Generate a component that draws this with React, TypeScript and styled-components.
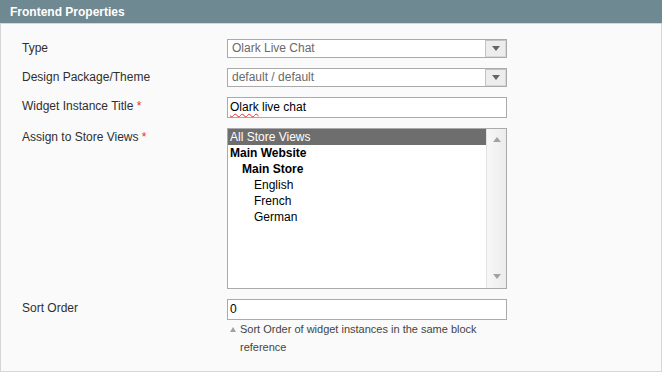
import React from 'react';
import styled, { createGlobalStyle } from 'styled-components';

const GlobalStyle = createGlobalStyle`
  body {
    margin: 0;
    font-family: 'Liberation Sans', Arial, sans-serif;
    font-size: 12px;
    color: #2f2f2f;
    background: #fff;
  }
`;

const Panel = styled.div`
  width: 662px;
  height: 372px;
  display: flex;
  flex-direction: column;
`;

const Head = styled.div`
  height: 23px;
  box-sizing: border-box;
  background: #6f8992;
  padding: 2px 10px 0;
  display: flex;
  align-items: center;
`;

const HeadTitle = styled.h4`
  margin: 0;
  color: #fff;
  font-size: 12px;
  font-weight: bold;
  line-height: 15px;
`;

const Fieldset = styled.div`
  flex: 1;
  background: #fafafa;
  border: 1px solid #d6d6d6;
  padding: 15px 0 0 21px;
`;

const FormGrid = styled.div`
  display: grid;
  grid-template-columns: 205px 280px;
  row-gap: 10px;
`;

const Label = styled.div`
  padding-top: 2px;
  line-height: 15px;
  color: #2f2f2f;
`;

const Required = styled.span`
  color: #eb340a;
`;

const Select = styled.div`
  height: 19px;
  box-sizing: border-box;
  border: 1px solid #aaa;
  background: #fff;
  display: flex;
  align-items: stretch;
`;

const SelectText = styled.div`
  flex: 1;
  padding-left: 4px;
  line-height: 17px;
  color: #6a6a6a;
`;

const SelectButton = styled.div`
  width: 21px;
  box-sizing: border-box;
  border: 1px solid #c3c3c3;
  border-right-color: #d8d8d8;
  border-bottom-color: #d8d8d8;
  background: #ededed;
  display: flex;
  align-items: center;
  justify-content: center;
`;

const Arrow = styled.span<{ up?: boolean; color?: string }>`
  width: 0;
  height: 0;
  border-left: 4px solid transparent;
  border-right: 4px solid transparent;
  ${(p) =>
    p.up
      ? `border-bottom: 5px solid ${p.color || '#666'};`
      : `border-top: 5px solid ${p.color || '#666'};`}
`;

const TextField = styled.div`
  height: 21px;
  box-sizing: border-box;
  border: 1px solid #aaa;
  background: #fff;
  padding: 0 2px;
  line-height: 19px;
  color: #000;
`;

const Misspelled = styled.span`
  text-decoration: underline wavy #e03030;
  text-decoration-thickness: 1px;
  text-underline-offset: 2px;
`;

const ListBox = styled.div`
  height: 161px;
  box-sizing: border-box;
  border: 1px solid #aaa;
  background: #fff;
  display: flex;
`;

const Options = styled.div`
  flex: 1;
`;

const Option = styled.div<{ level: number; strong?: boolean; selected?: boolean }>`
  height: 16px;
  line-height: 16px;
  padding-left: ${(p) => 2 + p.level * 12}px;
  font-weight: ${(p) => (p.strong ? 'bold' : 'normal')};
  background: ${(p) => (p.selected ? '#6e6e6e' : 'transparent')};
  color: ${(p) => (p.selected ? '#fff' : '#000')};
`;

const ScrollBar = styled.div`
  width: 20px;
  border-left: 1px solid #e2e2e2;
  background: linear-gradient(to right, #f7f7f7, #ececec);
  display: flex;
  flex-direction: column;
  justify-content: space-between;
  align-items: center;
  padding: 8px 0 9px;
  box-sizing: border-box;
`;

const Note = styled.div`
  display: flex;
  gap: 4px;
  padding-left: 3px;
  font-size: 11px;
  line-height: 18px;
  color: #444;
`;

const NoteMark = styled.span`
  width: 0;
  height: 0;
  margin-top: 7px;
  border-left: 3px solid transparent;
  border-right: 3px solid transparent;
  border-bottom: 5px solid #9aa4a8;
  flex-shrink: 0;
`;

const NoteText = styled.div`
  width: 250px;
`;

const stores = [
  { name: 'All Store Views', level: 0, strong: false, selected: true },
  { name: 'Main Website', level: 0, strong: true },
  { name: 'Main Store', level: 1, strong: true },
  { name: 'English', level: 2 },
  { name: 'French', level: 2 },
  { name: 'German', level: 2 },
];

function App() {
  return (
    <>
      <GlobalStyle />
      <Panel>
        <Head>
          <HeadTitle>Frontend Properties</HeadTitle>
        </Head>
        <Fieldset>
          <FormGrid>
            <Label>Type</Label>
            <Select>
              <SelectText>Olark Live Chat</SelectText>
              <SelectButton>
                <Arrow />
              </SelectButton>
            </Select>

            <Label>Design Package/Theme</Label>
            <Select>
              <SelectText>default / default</SelectText>
              <SelectButton>
                <Arrow />
              </SelectButton>
            </Select>

            <Label>
              Widget Instance Title <Required>*</Required>
            </Label>
            <TextField>
              <Misspelled>Olark</Misspelled> live chat
            </TextField>

            <Label>
              Assign to Store Views <Required>*</Required>
            </Label>
            <ListBox>
              <Options>
                {stores.map((s) => (
                  <Option key={s.name} level={s.level} strong={s.strong} selected={s.selected}>
                    {s.name}
                  </Option>
                ))}
              </Options>
              <ScrollBar>
                <Arrow up color="#a3a3a3" />
                <Arrow color="#a3a3a3" />
              </ScrollBar>
            </ListBox>

            <Label>Sort Order</Label>
            <div>
              <TextField>0</TextField>
              <Note>
                <NoteMark />
                <NoteText>Sort Order of widget instances in the same block reference</NoteText>
              </Note>
            </div>
          </FormGrid>
        </Fieldset>
      </Panel>
    </>
  );
}

export default App;
